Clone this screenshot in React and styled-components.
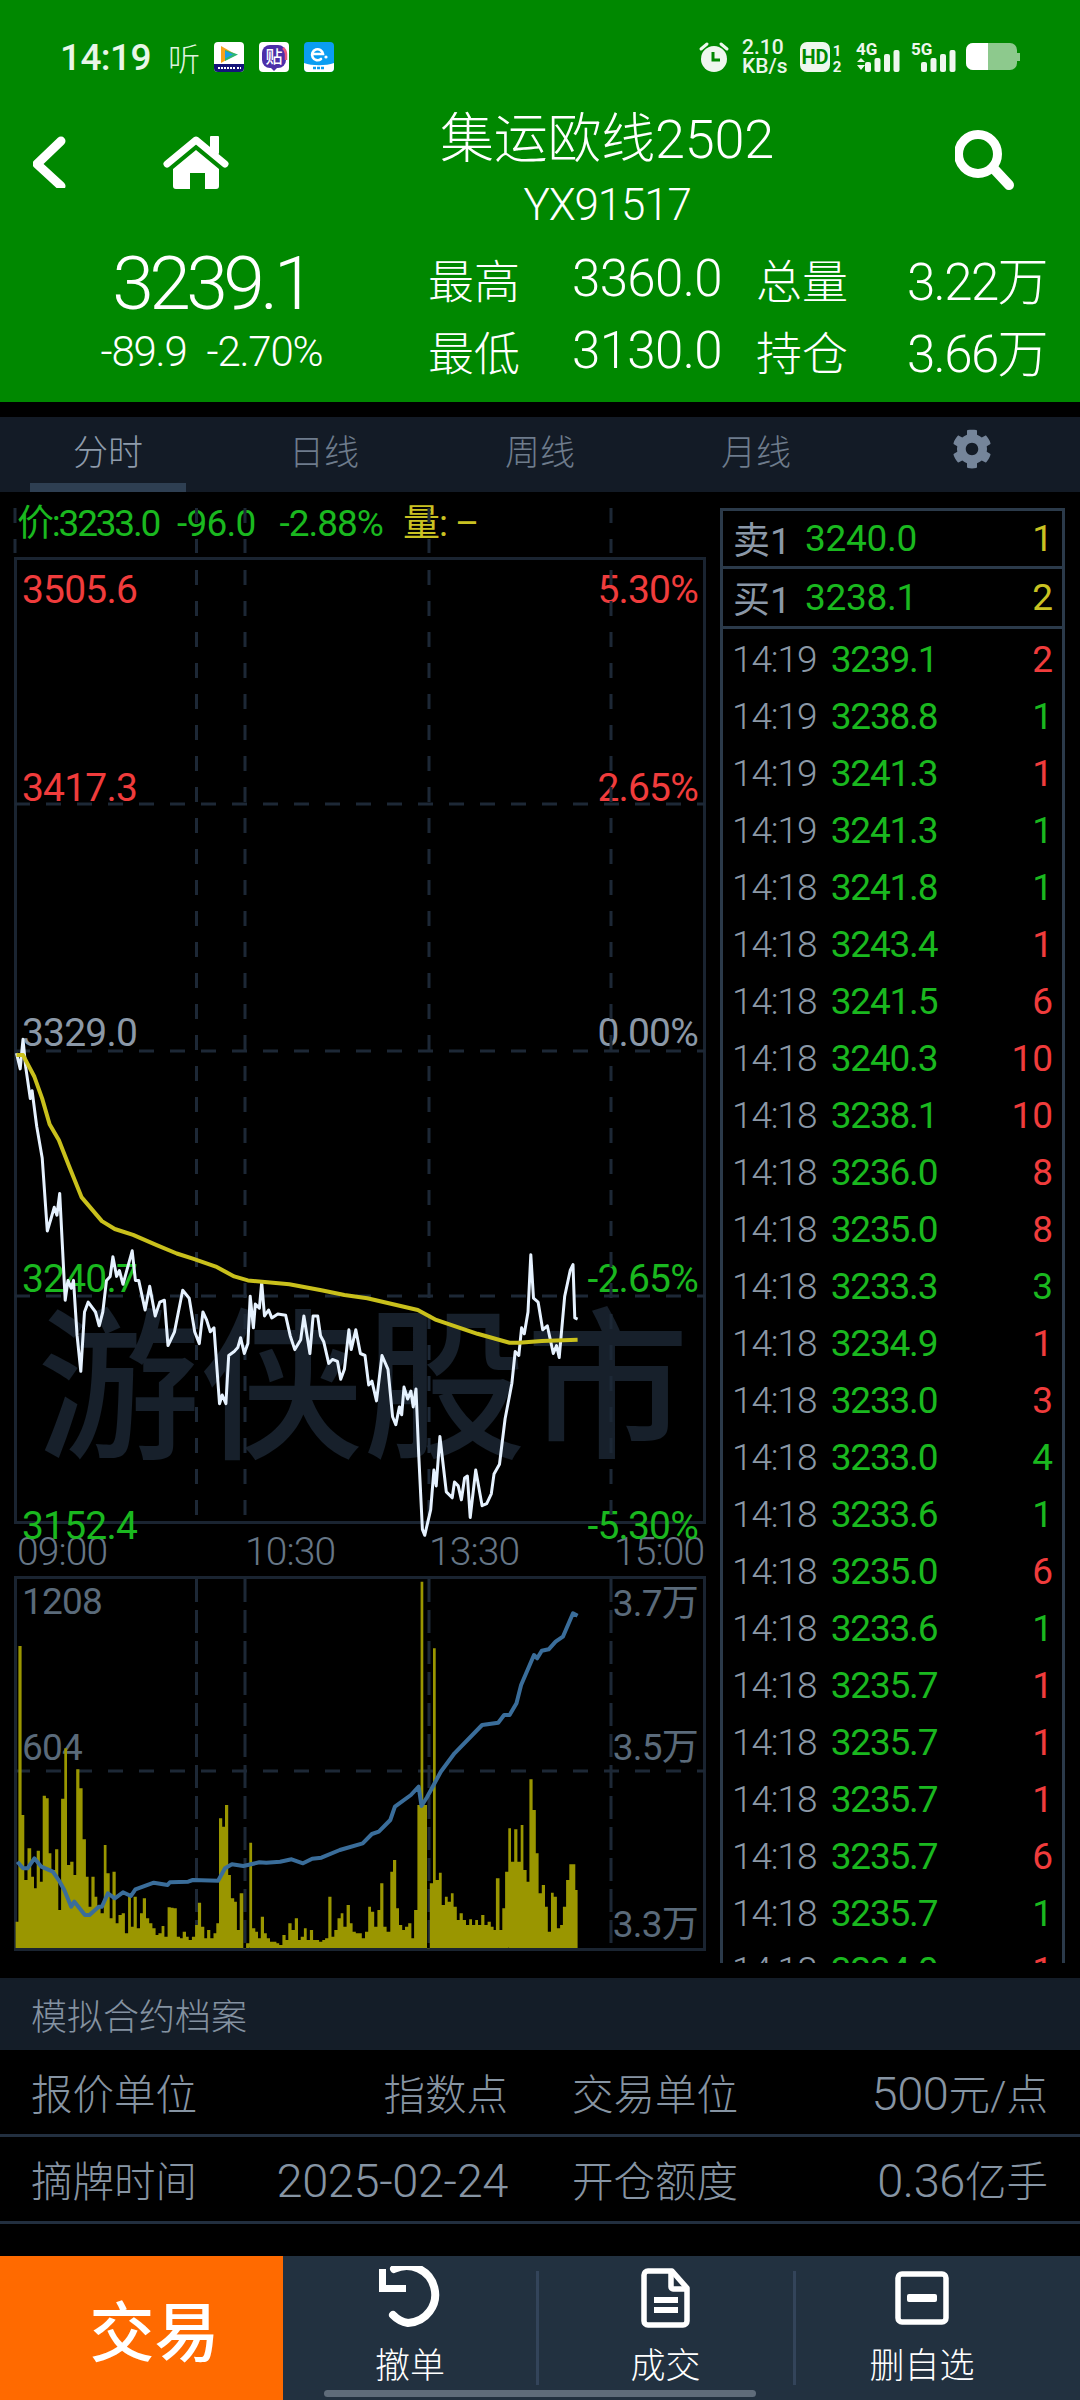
import React from "react";
import styled, { createGlobalStyle } from "styled-components";
import { FaCog } from "react-icons/fa";

const GlobalStyle = createGlobalStyle`
  html, body { margin: 0; padding: 0; background: #000; }
  * { box-sizing: border-box; }
  body { font-family: Roboto, "Noto Sans CJK SC", sans-serif; }
`;

const tones = {
  red: "#f03c3c",
  green: "#1ab81f",
  yellow: "#c9c222",
  grey: "#8b98a7",
  dim: "#5a6a7a",
};

const Page = styled.div`
  width: 1080px;
  height: 2400px;
  background: #000;
  display: flex;
  flex-direction: column;
  overflow: hidden;
  font-weight: 300;
`;

/* ---------- green header ---------- */
const Head = styled.header`
  height: 402px;
  background: #008800;
  color: #fff;
  padding-top: 40px;
`;

const StatusBar = styled.div`
  height: 34px;
  padding: 0 60px;
  display: flex;
  align-items: center;
  justify-content: space-between;
`;

const StatusSide = styled.div`
  display: flex;
  align-items: center;
`;

const Clock = styled.span`
  font-size: 37px;
  font-weight: 500;
  letter-spacing: -0.6px;
  color: #e8f6e8;
  width: 108px;
`;

const Listen = styled.span`
  font-size: 32px;
  font-weight: 300;
  color: #dff2df;
  width: 46px;
`;

const AppIcon = styled.svg`
  width: 30px;
  height: 30px;
  margin-right: 15px;
  display: block;
`;

const Speed = styled.div`
  display: flex;
  flex-direction: column;
  margin: 0 14px 0 13px;
  color: #eaf6ea;
  font-size: 21px;
  line-height: 19px;
  font-weight: 500;
  width: 44px;
  span { height: 19px; overflow: visible; }
`;

const NetIcon = styled.svg`
  display: block;
  flex: none;
  overflow: visible;
  margin-left: ${(p) => p.$ml || 0}px;
`;

const NavRow = styled.div`
  height: 132px;
  margin-top: 36px;
  padding-left: 33px;
  display: flex;
  align-items: flex-start;
`;

const BackIcon = styled.svg`
  width: 34px;
  height: 52px;
  margin-top: 26px;
  flex: none;
`;

const HomeIcon = styled.svg`
  width: 70px;
  height: 56px;
  margin: 25px 34px 0 95px;
  flex: none;
`;

const TitleBlock = styled.div`
  width: 682px;
  flex: none;
  text-align: center;
`;

const Title = styled.div`
  font-size: 54px;
  line-height: 60px;
  letter-spacing: -0.2px;
  font-weight: 300;
`;

const SubTitle = styled.div`
  font-size: 44px;
  line-height: 50px;
  margin-top: 10px;
  letter-spacing: -1.2px;
`;

const SearchIcon = styled.svg`
  width: 62px;
  height: 66px;
  margin: 18px 0 0 7px;
  flex: none;
`;

const QuoteRow = styled.div`
  display: flex;
  margin-top: -2px;
`;

const LastPrice = styled.div`
  width: 428px;
  flex: none;
  padding: 2px 5px 0 0;
  text-align: center;
`;

const PriceBig = styled.div`
  font-size: 75px;
  line-height: 82px;
  letter-spacing: -4.6px;
  font-weight: 300;
`;

const PriceChange = styled.div`
  font-size: 42px;
  line-height: 44px;
  margin-top: 6px;
  letter-spacing: -1.2px;
  word-spacing: 11px;
`;

const StatGrid = styled.div`
  display: grid;
  grid-template-columns: 294px 291px;
  grid-auto-rows: 72px;
  column-gap: 34px;
  margin-top: 2px;
`;

const Stat = styled.div`
  display: flex;
  align-items: center;
  justify-content: space-between;
`;

const StatLabel = styled.span`
  font-size: 46px;
  font-weight: 300;
`;

const StatValue = styled.span`
  font-size: 51px;
  letter-spacing: ${(p) => p.$ls ?? -1.6}px;
`;

/* ---------- tabs ---------- */
const Tabs = styled.nav`
  margin-top: 15px;
  height: 75px;
  background: #131b26;
  display: grid;
  grid-template-columns: repeat(5, 216px);
`;

const Tab = styled.div`
  position: relative;
  display: flex;
  align-items: center;
  justify-content: center;
  padding-bottom: 10px;
  font-size: 35px;
  font-weight: 300;
  color: ${(p) => (p.$active ? "#8e9bab" : "#6e7c8c")};
  svg { color: #75859a; }
  &::after {
    content: "";
    display: ${(p) => (p.$active ? "block" : "none")};
    position: absolute;
    left: 30px;
    bottom: 0;
    width: 156px;
    height: 9px;
    background: #2e3f52;
  }
`;

/* ---------- market area ---------- */
const Market = styled.section`
  height: 1473px;
  padding: 0 15px 0 14px;
  display: flex;
  gap: 14px;
  overflow: hidden;
`;

const ChartColumn = styled.div`
  width: 692px;
  flex: none;
`;

const InfoLine = styled.div`
  position: relative;
  height: 65px;
  padding: 13px 0 0 3px;
  display: flex;
  font-size: 37px;
  line-height: 38px;
  font-weight: 400;
  color: ${tones.green};
`;

const InfoItem = styled.span`
  margin-right: ${(p) => p.$gap || 0}px;
  letter-spacing: ${(p) => p.$ls ?? -1}px;
  color: ${(p) => tones[p.$tone || "green"]};
`;

const Frame = styled.div`
  position: relative;
  height: ${(p) => p.$h}px;
  border: 3px solid #1a2431;
`;

const Drawing = styled.svg`
  position: absolute;
  top: ${(p) => p.$inset || 0}px;
  left: ${(p) => p.$inset || 0}px;
  width: 692px;
  height: ${(p) => p.$h}px;
  overflow: visible;
  pointer-events: none;
`;

const Watermark = styled.div`
  position: absolute;
  left: 20px;
  top: 748px;
  font-size: 163px;
  line-height: 163px;
  font-weight: 500;
  white-space: nowrap;
  color: #17202b;
`;

const ScaleLabel = styled.span`
  position: absolute;
  top: ${(p) => p.$y}px;
  ${(p) => (p.$right ? "right: 5px;" : "left: 5px;")}
  font-size: ${(p) => p.$size || 39}px;
  line-height: 30px;
  letter-spacing: -0.8px;
  font-weight: 400;
  transform: translateY(-50%);
  color: ${(p) => tones[p.$tone]};
`;

const TimeAxis = styled.div`
  height: 52px;
  padding: 5px 0 0 3px;
  display: grid;
  grid-template-columns: 228px 184px 185px 1fr;
  align-items: center;
  font-size: 39px;
  line-height: 30px;
  letter-spacing: -0.9px;
  font-weight: 300;
  color: #667686;
`;

/* ---------- order book ---------- */
const BookColumn = styled.div`
  width: 345px;
  margin-top: 16px;
  flex: none;
  border: 3px solid #2b3a4a;
  border-bottom: 0;
  display: flex;
  flex-direction: column;
  overflow: hidden;
  font-size: 37px;
  font-weight: 400;
`;

const QuoteLine = styled.div`
  height: ${(p) => p.$h}px;
  flex: none;
  border-bottom: 3px solid #2b3a4a;
  padding: 0 9px 0 10px;
  display: grid;
  grid-template-columns: 62px 122px 1fr;
  align-items: center;
  color: ${tones.grey};
`;

const QuotePrice = styled.span`
  text-align: right;
  letter-spacing: -0.3px;
  color: ${tones.green};
`;

const Qty = styled.span`
  text-align: right;
  color: ${(p) => tones[p.$tone]};
`;

const TickList = styled.div`
  padding-top: 2px;
`;

const TickRow = styled.div`
  height: 57px;
  padding: 0 9px 0 9px;
  display: grid;
  grid-template-columns: 91px 122px 1fr;
  align-items: center;
  color: ${tones.grey};
`;

const TickTime = styled.span`
  letter-spacing: -1.1px;
  font-weight: 300;
`;

const TickPrice = styled.span`
  text-align: center;
  letter-spacing: -1.2px;
  color: ${tones.green};
`;

/* ---------- contract profile ---------- */
const Profile = styled.section`
  margin-top: 15px;
`;

const ProfileHead = styled.div`
  height: 72px;
  padding: 0 31px;
  background: #141d28;
  display: flex;
  align-items: center;
  font-size: 36px;
  font-weight: 300;
  color: #8492a1;
`;

const ProfileRow = styled.div`
  height: 87px;
  padding: 0 32px 0 31px;
  border-bottom: 3px solid #222f3f;
  display: grid;
  grid-template-columns: 477px 64px 476px;
  align-items: center;
  font-size: 41.5px;
  font-weight: 300;
  color: #8694a3;
`;

const ProfileGroup = styled.div`
  grid-column: ${(p) => (p.$second ? 3 : 1)};
  display: flex;
  align-items: baseline;
  justify-content: space-between;
  white-space: nowrap;
`;

const Digits = styled.span`
  font-size: 47px;
  font-weight: 300;
  letter-spacing: -0.4px;
`;

/* ---------- bottom toolbar ---------- */
const Toolbar = styled.footer`
  position: relative;
  margin-top: 32px;
  height: 144px;
  background: #223140;
  padding-right: 30px;
  display: grid;
  grid-template-columns: 283px 254px 257px 1fr;
`;

const TradeButton = styled.div`
  background: #ff6a00;
  color: #fff;
  font-size: 65px;
  font-weight: 500;
  padding: 42px 0 0 26px;
  text-align: center;
  line-height: 72px;
`;

const ToolButton = styled.div`
  position: relative;
  display: flex;
  flex-direction: column;
  align-items: center;
  color: #fff;
  font-size: 35px;
  font-weight: 300;
  &::after {
    content: "";
    display: ${(p) => (p.$sep ? "block" : "none")};
    position: absolute;
    left: -1px;
    top: 15px;
    width: 3px;
    height: 114px;
    background: #33445a;
  }
`;

const ToolIcon = styled.svg`
  width: 64px;
  height: 64px;
  margin-top: 10px;
  display: block;
`;

const ToolLabel = styled.span`
  line-height: 44px;
  margin-top: 15px;
`;

const HomeIndicator = styled.div`
  position: absolute;
  left: 324px;
  bottom: 3px;
  width: 432px;
  height: 7px;
  border-radius: 4px;
  background: #5f6c7a;
`;

/* ---------- chart data, traced from the picture ---------- */
const priceTrace = [36,185,44,225,50,150,56,220,66,300,70,280,80,370,92,450,103,635,112,600,118,575,124,595,130,540,142,810,148,760,155,780,160,760,168,900,176,990,184,840,192,815,208,840,216,875,224,840,232,760,240,750,246,700,254,750,260,735,268,770,288,685,295,760,302,760,316,835,326,775,338,850,348,815,358,810,366,925,380,890,398,785,412,805,424,890,434,920,442,840,450,860,458,890,466,880,478,1072,484,1050,492,1072,498,950,510,940,518,930,524,905,532,945,540,920,545,800,552,880,556,820,565,830,570,765,576,850,585,835,592,855,605,845,622,848,632,900,642,935,655,910,662,850,675,945,682,850,692,850,698,900,705,915,716,970,724,960,735,965,742,1010,750,985,760,885,765,935,775,885,785,945,795,950,803,1025,810,1015,820,1065,832,950,845,985,855,1105,862,1125,870,1080,875,1100,880,1030,888,1060,895,1040,900,1080,906,1035,912,1200,920,1390,925,1405,938,1340,945,1240,950,1280,958,1155,972,1295,985,1310,990,1270,998,1280,1005,1315,1012,1260,1018,1255,1024,1360,1036,1240,1050,1330,1060,1325,1070,1300,1076,1250,1088,1225,1100,1110,1115,1020,1122,940,1130,950,1136,880,1142,895,1150,840,1156,695,1162,805,1172,815,1182,885,1192,875,1205,945,1212,925,1218,955,1230,800,1242,735,1248,720,1252,855,1258,858];

const avgTrace = [36,190,50,190,75,245,92,300,108,365,128,405,150,470,178,550,222,610,250,630,290,645,340,670,385,692,420,705,470,725,510,750,540,760,630,770,700,785,750,797,800,805,910,835,950,860,1040,895,1110,918,1130,918,1180,913,1258,910];

const volumeBars = [34,1085,40,258,47,765,53,960,60,865,68,950,74,985,80,872,87,965,93,707,100,715,106,880,112,930,120,868,127,1050,133,716,140,565,146,915,153,905,160,945,166,628,173,685,180,838,187,950,193,1040,199,950,206,1010,212,1040,219,1060,226,855,232,940,239,1075,245,935,252,1090,258,1065,265,1060,272,1120,279,1010,285,1100,291,1010,298,1105,305,1060,311,1015,318,1075,325,1090,332,1105,339,1125,345,1120,352,1098,358,1130,365,1042,372,1043,378,1045,385,1130,392,1135,398,1115,405,1130,411,1140,418,1130,425,1095,431,1028,438,1100,445,1135,451,1110,458,1135,465,1120,471,1090,477,775,484,800,490,735,497,945,503,1015,510,1025,516,1110,522,1000,530,1165,536,1150,543,848,549,1105,556,1115,562,1135,568,1070,575,1120,581,1135,588,1145,595,1145,602,1150,608,1155,615,1125,622,1140,628,1090,635,1110,642,1075,649,1140,655,1130,662,1105,668,1140,675,1110,682,1140,689,1140,695,1145,702,1140,708,1135,715,1010,722,1130,728,1110,735,1075,742,1060,748,1100,755,1035,762,1090,768,1115,775,1120,782,1120,788,1135,795,1115,802,1040,808,1055,815,1100,822,1050,828,970,835,1100,842,1115,850,935,856,900,863,1045,869,1095,876,1110,882,1100,889,1090,896,1135,902,1050,909,735,916,65,922,735,930,1165,936,970,943,265,949,960,956,938,962,1035,969,1010,975,1025,982,1000,988,1040,995,1080,1001,1060,1008,1080,1015,1095,1022,1078,1028,1095,1035,1080,1041,1095,1048,1065,1055,1095,1062,1085,1069,1100,1075,1110,1080,955,1088,1110,1094,1045,1100,935,1107,805,1113,905,1120,808,1127,905,1134,795,1140,930,1147,965,1153,658,1160,750,1167,880,1173,1000,1180,975,1187,1040,1193,1115,1200,998,1206,1010,1213,1105,1220,1095,1226,1040,1233,960,1240,913,1247,913,1253,990,1258,990];

const amountTrace = [38,905,50,925,60,925,75,895,90,920,115,935,130,965,140,990,155,1040,162,1025,185,1065,195,1065,215,1040,222,1040,235,1000,250,1015,268,997,285,1008,295,988,335,968,365,975,370,967,410,965,420,960,475,962,490,925,505,913,530,918,565,907,580,908,610,905,635,898,660,910,680,896,700,893,740,870,790,850,810,822,825,815,850,780,860,740,895,705,912,680,918,738,930,712,960,635,990,580,1050,495,1085,488,1098,465,1110,465,1125,430,1135,375,1163,285,1170,295,1180,272,1195,268,1210,245,1226,230,1248,160,1258,167];

const priceX = (x) => (x / 2.178).toFixed(1);
const priceY = (y) => (980 + y / 2.53).toFixed(1);
const volY = (y) => (1560 + y / 3).toFixed(1);

function toPoints(flat, fy) {
  const out = [];
  for (let i = 0; i < flat.length; i += 2) out.push(`${priceX(flat[i])},${fy(flat[i + 1])}`);
  return out.join(" ");
}

function barsPath(flat) {
  let d = "";
  for (let i = 0; i < flat.length - 2; i += 2) {
    d += `M${priceX(flat[i])} ${volY(flat[i + 1])}H${priceX(flat[i + 2])}V1948H${priceX(flat[i])}Z`;
  }
  return d;
}

const gridX = [196.5, 245, 429, 611];
const gridStroke = "#1d2836";

function GridLines({ top, bottom, rows = [], dash = "15 16", extra = [] }) {
  return (
    <g stroke={gridStroke} strokeWidth="3" fill="none">
      {[...extra, ...gridX].map((x) => (
        <line key={x} x1={x} x2={x} y1={top} y2={bottom} strokeDasharray={dash} />
      ))}
      {rows.map((y) => (
        <line key={y} x1="15" x2="705" y1={y} y2={y} strokeDasharray="15 16" />
      ))}
    </g>
  );
}

/* ---------- small status and toolbar drawings ---------- */
function VideoIcon() {
  return (
    <AppIcon viewBox="0 0 30 30">
      <rect width="30" height="30" rx="4" fill="#fff" />
      <path d="M7 4l15 8.5L7 21z" fill="#f7a21b" />
      <path d="M11 8l13 4.5L11 19z" fill="#2bb673" />
      <path d="M11 9l8 3.5-8 4z" fill="#1c9ce8" />
      <path d="M0 22h30v4a4 4 0 0 1-4 4H4a4 4 0 0 1-4-4z" fill="#14147a" />
      <path d="M4 26h17M23 26h4" stroke="#fff" strokeWidth="2" strokeDasharray="2 1" />
    </AppIcon>
  );
}

function TieIcon() {
  return (
    <AppIcon viewBox="0 0 30 30">
      <rect width="30" height="30" rx="4" fill="#fff" />
      <rect x="3" y="3" width="24" height="23" rx="8" fill="#4c2fa8" />
      <path d="M24 6a8 8 0 0 1 3 6v6" stroke="#e8557f" strokeWidth="2.5" fill="none" />
      <path d="M12 26l3 3 3-3z" fill="#4c2fa8" />
      <text x="15" y="21" textAnchor="middle" fontSize="17" fontWeight="500" fill="#fff">贴</text>
    </AppIcon>
  );
}

function ElemeIcon() {
  return (
    <AppIcon viewBox="0 0 30 30">
      <rect width="30" height="30" rx="4" fill="#0a9df2" />
      <path d="M0 21c8 3 22 3 30 0v5a4 4 0 0 1-4 4H4a4 4 0 0 1-4-4z" fill="#fff" />
      <path d="M9 12h10a5.5 5.5 0 1 0-2 5" stroke="#fff" strokeWidth="2.6" fill="none" strokeLinecap="round" />
      <circle cx="22" cy="15" r="1.6" fill="#fff" />
      <path d="M9 26h12" stroke="#0a9df2" strokeWidth="2.5" strokeDasharray="3 1" />
    </AppIcon>
  );
}

function Alarm() {
  return (
    <NetIcon width="30" height="32" viewBox="0 0 30 32">
      <path d="M2 8l6-5M28 8l-6-5" stroke="#eef7ee" strokeWidth="3" strokeLinecap="round" />
      <circle cx="15" cy="18" r="13" fill="#eef7ee" />
      <path d="M14 11v8h7" stroke="#008800" strokeWidth="3" fill="none" />
    </NetIcon>
  );
}

function HdBadge() {
  return (
    <NetIcon width="44" height="32" viewBox="0 0 44 32">
      <rect x="0" y="1" width="30" height="30" rx="7" fill="#eef7ee" />
      <text x="15" y="23" textAnchor="middle" fontSize="20" fontWeight="700" fill="#008800">HD</text>
      <text x="37" y="15" textAnchor="middle" fontSize="15" fontWeight="700" fill="#eef7ee">1</text>
      <text x="37" y="31" textAnchor="middle" fontSize="15" fontWeight="700" fill="#eef7ee">2</text>
    </NetIcon>
  );
}

function Signal({ label, arrows, ml }) {
  return (
    <NetIcon $ml={ml} width="46" height="32" viewBox="0 0 46 32">
      <text x={arrows ? 1 : 0} y="14" fontSize="17" fontWeight="700" fill="#eef7ee">{label}</text>
      {arrows && <path d="M2 21l4-4 4 4zM2 24h8l-4 5z" fill="#eef7ee" />}
      {[0, 1, 2, 3].map((i) => (
        <rect
          key={i}
          x={10 + i * 9.5}
          y={21 - i * 4}
          width="6"
          height={10 + i * 4}
          rx="2"
          fill="#eef7ee"
        />
      ))}
    </NetIcon>
  );
}

function Battery() {
  return (
    <NetIcon $ml={9} width="54" height="30" viewBox="0 0 54 30">
      <rect x="0" y="1" width="51" height="27" rx="7" fill="#8dc98d" />
      <path d="M51 11h3v8h-3z" fill="#8dc98d" />
      <path d="M7 1h15v27H7a7 7 0 0 1-7-7V8a7 7 0 0 1 7-7z" fill="#fff" />
    </NetIcon>
  );
}

const bookTicks = [
  ["14:19", "3239.1", "2", "red"],
  ["14:19", "3238.8", "1", "green"],
  ["14:19", "3241.3", "1", "red"],
  ["14:19", "3241.3", "1", "green"],
  ["14:18", "3241.8", "1", "green"],
  ["14:18", "3243.4", "1", "red"],
  ["14:18", "3241.5", "6", "red"],
  ["14:18", "3240.3", "10", "red"],
  ["14:18", "3238.1", "10", "red"],
  ["14:18", "3236.0", "8", "red"],
  ["14:18", "3235.0", "8", "red"],
  ["14:18", "3233.3", "3", "green"],
  ["14:18", "3234.9", "1", "red"],
  ["14:18", "3233.0", "3", "red"],
  ["14:18", "3233.0", "4", "green"],
  ["14:18", "3233.6", "1", "green"],
  ["14:18", "3235.0", "6", "red"],
  ["14:18", "3233.6", "1", "green"],
  ["14:18", "3235.7", "1", "red"],
  ["14:18", "3235.7", "1", "red"],
  ["14:18", "3235.7", "1", "red"],
  ["14:18", "3235.7", "6", "red"],
  ["14:18", "3235.7", "1", "green"],
  ["14:18", "3234.0", "1", "red"],
];

export default function App() {
  return (
    <Page>
      <GlobalStyle />

      <Head>
        <StatusBar>
          <StatusSide>
            <Clock>14:19</Clock>
            <Listen>听</Listen>
            <VideoIcon />
            <TieIcon />
            <ElemeIcon />
          </StatusSide>
          <StatusSide>
            <Alarm />
            <Speed>
              <span>2.10</span>
              <span>KB/s</span>
            </Speed>
            <HdBadge />
            <Signal label="4G" arrows ml={11} />
            <Signal label="5G" ml={10} />
            <Battery />
          </StatusSide>
        </StatusBar>

        <NavRow>
          <BackIcon viewBox="0 0 34 52">
            <path d="M28 5L4 28l24 22" stroke="#fff" strokeWidth="9" fill="none" strokeLinecap="round" strokeLinejoin="round" />
          </BackIcon>
          <HomeIcon viewBox="0 0 70 56">
            <path d="M5 29L34 5l29 24" stroke="#fff" strokeWidth="7" fill="none" strokeLinecap="round" strokeLinejoin="round" />
            <rect x="48" y="1" width="9" height="18" rx="1" fill="#fff" />
            <path d="M34 15L57 34v17a3 3 0 0 1-3 3H43V38H28v16H14a3 3 0 0 1-3-3V34z" fill="#fff" />
          </HomeIcon>
          <TitleBlock>
            <Title>集运欧线2502</Title>
            <SubTitle>YX91517</SubTitle>
          </TitleBlock>
          <SearchIcon viewBox="0 0 62 66">
            <circle cx="23" cy="26" r="19.5" stroke="#fff" strokeWidth="9" fill="none" />
            <path d="M40 42l14 15" stroke="#fff" strokeWidth="10" strokeLinecap="round" />
          </SearchIcon>
        </NavRow>

        <QuoteRow>
          <LastPrice>
            <PriceBig>3239.1</PriceBig>
            <PriceChange>-89.9 -2.70%</PriceChange>
          </LastPrice>
          <StatGrid>
            <Stat><StatLabel>最高</StatLabel><StatValue $ls={-0.6}>3360.0</StatValue></Stat>
            <Stat><StatLabel>总量</StatLabel><StatValue>3.22万</StatValue></Stat>
            <Stat><StatLabel>最低</StatLabel><StatValue $ls={-0.6}>3130.0</StatValue></Stat>
            <Stat><StatLabel>持仓</StatLabel><StatValue>3.66万</StatValue></Stat>
          </StatGrid>
        </QuoteRow>
      </Head>

      <Tabs>
        <Tab $active>分时</Tab>
        <Tab>日线</Tab>
        <Tab>周线</Tab>
        <Tab>月线</Tab>
        <Tab><FaCog size={40} /></Tab>
      </Tabs>

      <Market>
        <ChartColumn>
          <InfoLine>
            <Drawing $h={65} viewBox="14 492 692 65">
              <GridLines top={508} bottom={553} extra={[15]} />
            </Drawing>
            <InfoItem $gap={18} $ls={-2.2}>价:3233.0</InfoItem>
            <InfoItem $gap={24} $ls={-0.8}>-96.0</InfoItem>
            <InfoItem $gap={20}>-2.88%</InfoItem>
            <InfoItem $tone="yellow">量: –</InfoItem>
          </InfoLine>

          <Frame $h={967}>
            <Watermark>游侠股市</Watermark>
            <ScaleLabel $y={30} $tone="red">3505.6</ScaleLabel>
            <ScaleLabel $y={228} $tone="red">3417.3</ScaleLabel>
            <ScaleLabel $y={473} $tone="grey">3329.0</ScaleLabel>
            <ScaleLabel $y={719} $tone="green">3240.7</ScaleLabel>
            <ScaleLabel $y={966} $tone="green">3152.4</ScaleLabel>
            <ScaleLabel $y={30} $right $tone="red">5.30%</ScaleLabel>
            <ScaleLabel $y={228} $right $tone="red">2.65%</ScaleLabel>
            <ScaleLabel $y={473} $right $tone="grey">0.00%</ScaleLabel>
            <ScaleLabel $y={719} $right $tone="green">-2.65%</ScaleLabel>
            <ScaleLabel $y={966} $right $tone="green">-5.30%</ScaleLabel>
            <Drawing $h={967} $inset={-3} viewBox="14 557 692 967">
              <GridLines top={570} bottom={1520} rows={[804, 1051, 1296]} />
              <polyline points={toPoints(priceTrace, priceY)} fill="none" stroke="#e6f2ff" strokeWidth="3" strokeLinejoin="round" />
              <polyline points={toPoints(avgTrace, priceY)} fill="none" stroke="#c9c01c" strokeWidth="4" strokeLinejoin="round" />
            </Drawing>
          </Frame>

          <TimeAxis>
            <span>09:00</span>
            <span>10:30</span>
            <span>13:30</span>
            <span>15:00</span>
          </TimeAxis>

          <Frame $h={375}>
            <ScaleLabel $size={37} $y={23} $tone="dim">1208</ScaleLabel>
            <ScaleLabel $size={37} $y={169} $tone="dim">604</ScaleLabel>
            <ScaleLabel $size={37} $y={25} $right $tone="dim">3.7万</ScaleLabel>
            <ScaleLabel $size={37} $y={169} $right $tone="dim">3.5万</ScaleLabel>
            <ScaleLabel $size={37} $y={346} $right $tone="dim">3.3万</ScaleLabel>
            <Drawing $h={375} $inset={-3} viewBox="14 1576 692 375">
              <GridLines top={1579} bottom={1947} rows={[1771]} dash="23 8" />
              <path d={barsPath(volumeBars)} fill="#9a9600" />
              <polyline points={toPoints(amountTrace, volY)} fill="none" stroke="#3a6d9a" strokeWidth="4" strokeLinejoin="round" />
            </Drawing>
          </Frame>
        </ChartColumn>

        <BookColumn>
          <QuoteLine $h={58}>
            <span>卖1</span>
            <QuotePrice>3240.0</QuotePrice>
            <Qty $tone="yellow">1</Qty>
          </QuoteLine>
          <QuoteLine $h={60}>
            <span>买1</span>
            <QuotePrice>3238.1</QuotePrice>
            <Qty $tone="yellow">2</Qty>
          </QuoteLine>
          <TickList>
            {bookTicks.map(([time, price, qty, tone], i) => (
              <TickRow key={i}>
                <TickTime>{time}</TickTime>
                <TickPrice>{price}</TickPrice>
                <Qty $tone={tone}>{qty}</Qty>
              </TickRow>
            ))}
          </TickList>
        </BookColumn>
      </Market>

      <Profile>
        <ProfileHead>模拟合约档案</ProfileHead>
        <ProfileRow>
          <ProfileGroup><span>报价单位</span><span>指数点</span></ProfileGroup>
          <ProfileGroup $second><span>交易单位</span><span><Digits>500</Digits>元/点</span></ProfileGroup>
        </ProfileRow>
        <ProfileRow>
          <ProfileGroup><span>摘牌时间</span><Digits>2025-02-24</Digits></ProfileGroup>
          <ProfileGroup $second><span>开仓额度</span><span><Digits>0.36</Digits>亿手</span></ProfileGroup>
        </ProfileRow>
      </Profile>

      <Toolbar>
        <TradeButton>交易</TradeButton>
        <ToolButton>
          <ToolIcon viewBox="0 0 64 64">
            <path d="M14 50a27 27 0 0 0 15 8 28.5 28.5 0 1 0-14-54" stroke="#fff" strokeWidth="8" fill="none" strokeLinecap="round" transform="translate(1 -1)" />
            <path d="M1 3h7v16h20v7H1z" fill="#fff" />
          </ToolIcon>
          <ToolLabel>撤单</ToolLabel>
        </ToolButton>
        <ToolButton $sep>
          <ToolIcon viewBox="0 0 64 64">
            <path d="M14 5h24l15 17v33a4 4 0 0 1-4 4H14a4 4 0 0 1-4-4V9a4 4 0 0 1 4-4z" stroke="#fff" strokeWidth="5.5" fill="none" strokeLinejoin="round" />
            <path d="M37 5v16a2 2 0 0 0 2 2h14" stroke="#fff" strokeWidth="5.5" fill="none" />
            <path d="M20 31h24v6H20zM20 41h24v6H20z" fill="#fff" />
          </ToolIcon>
          <ToolLabel>成交</ToolLabel>
        </ToolButton>
        <ToolButton $sep>
          <ToolIcon viewBox="0 0 64 64">
            <rect x="8" y="8" width="48" height="48" rx="4" stroke="#fff" strokeWidth="5.5" fill="none" />
            <rect x="17" y="28" width="30" height="8" rx="2" fill="#fff" />
          </ToolIcon>
          <ToolLabel>删自选</ToolLabel>
        </ToolButton>
        <HomeIndicator />
      </Toolbar>
    </Page>
  );
}
